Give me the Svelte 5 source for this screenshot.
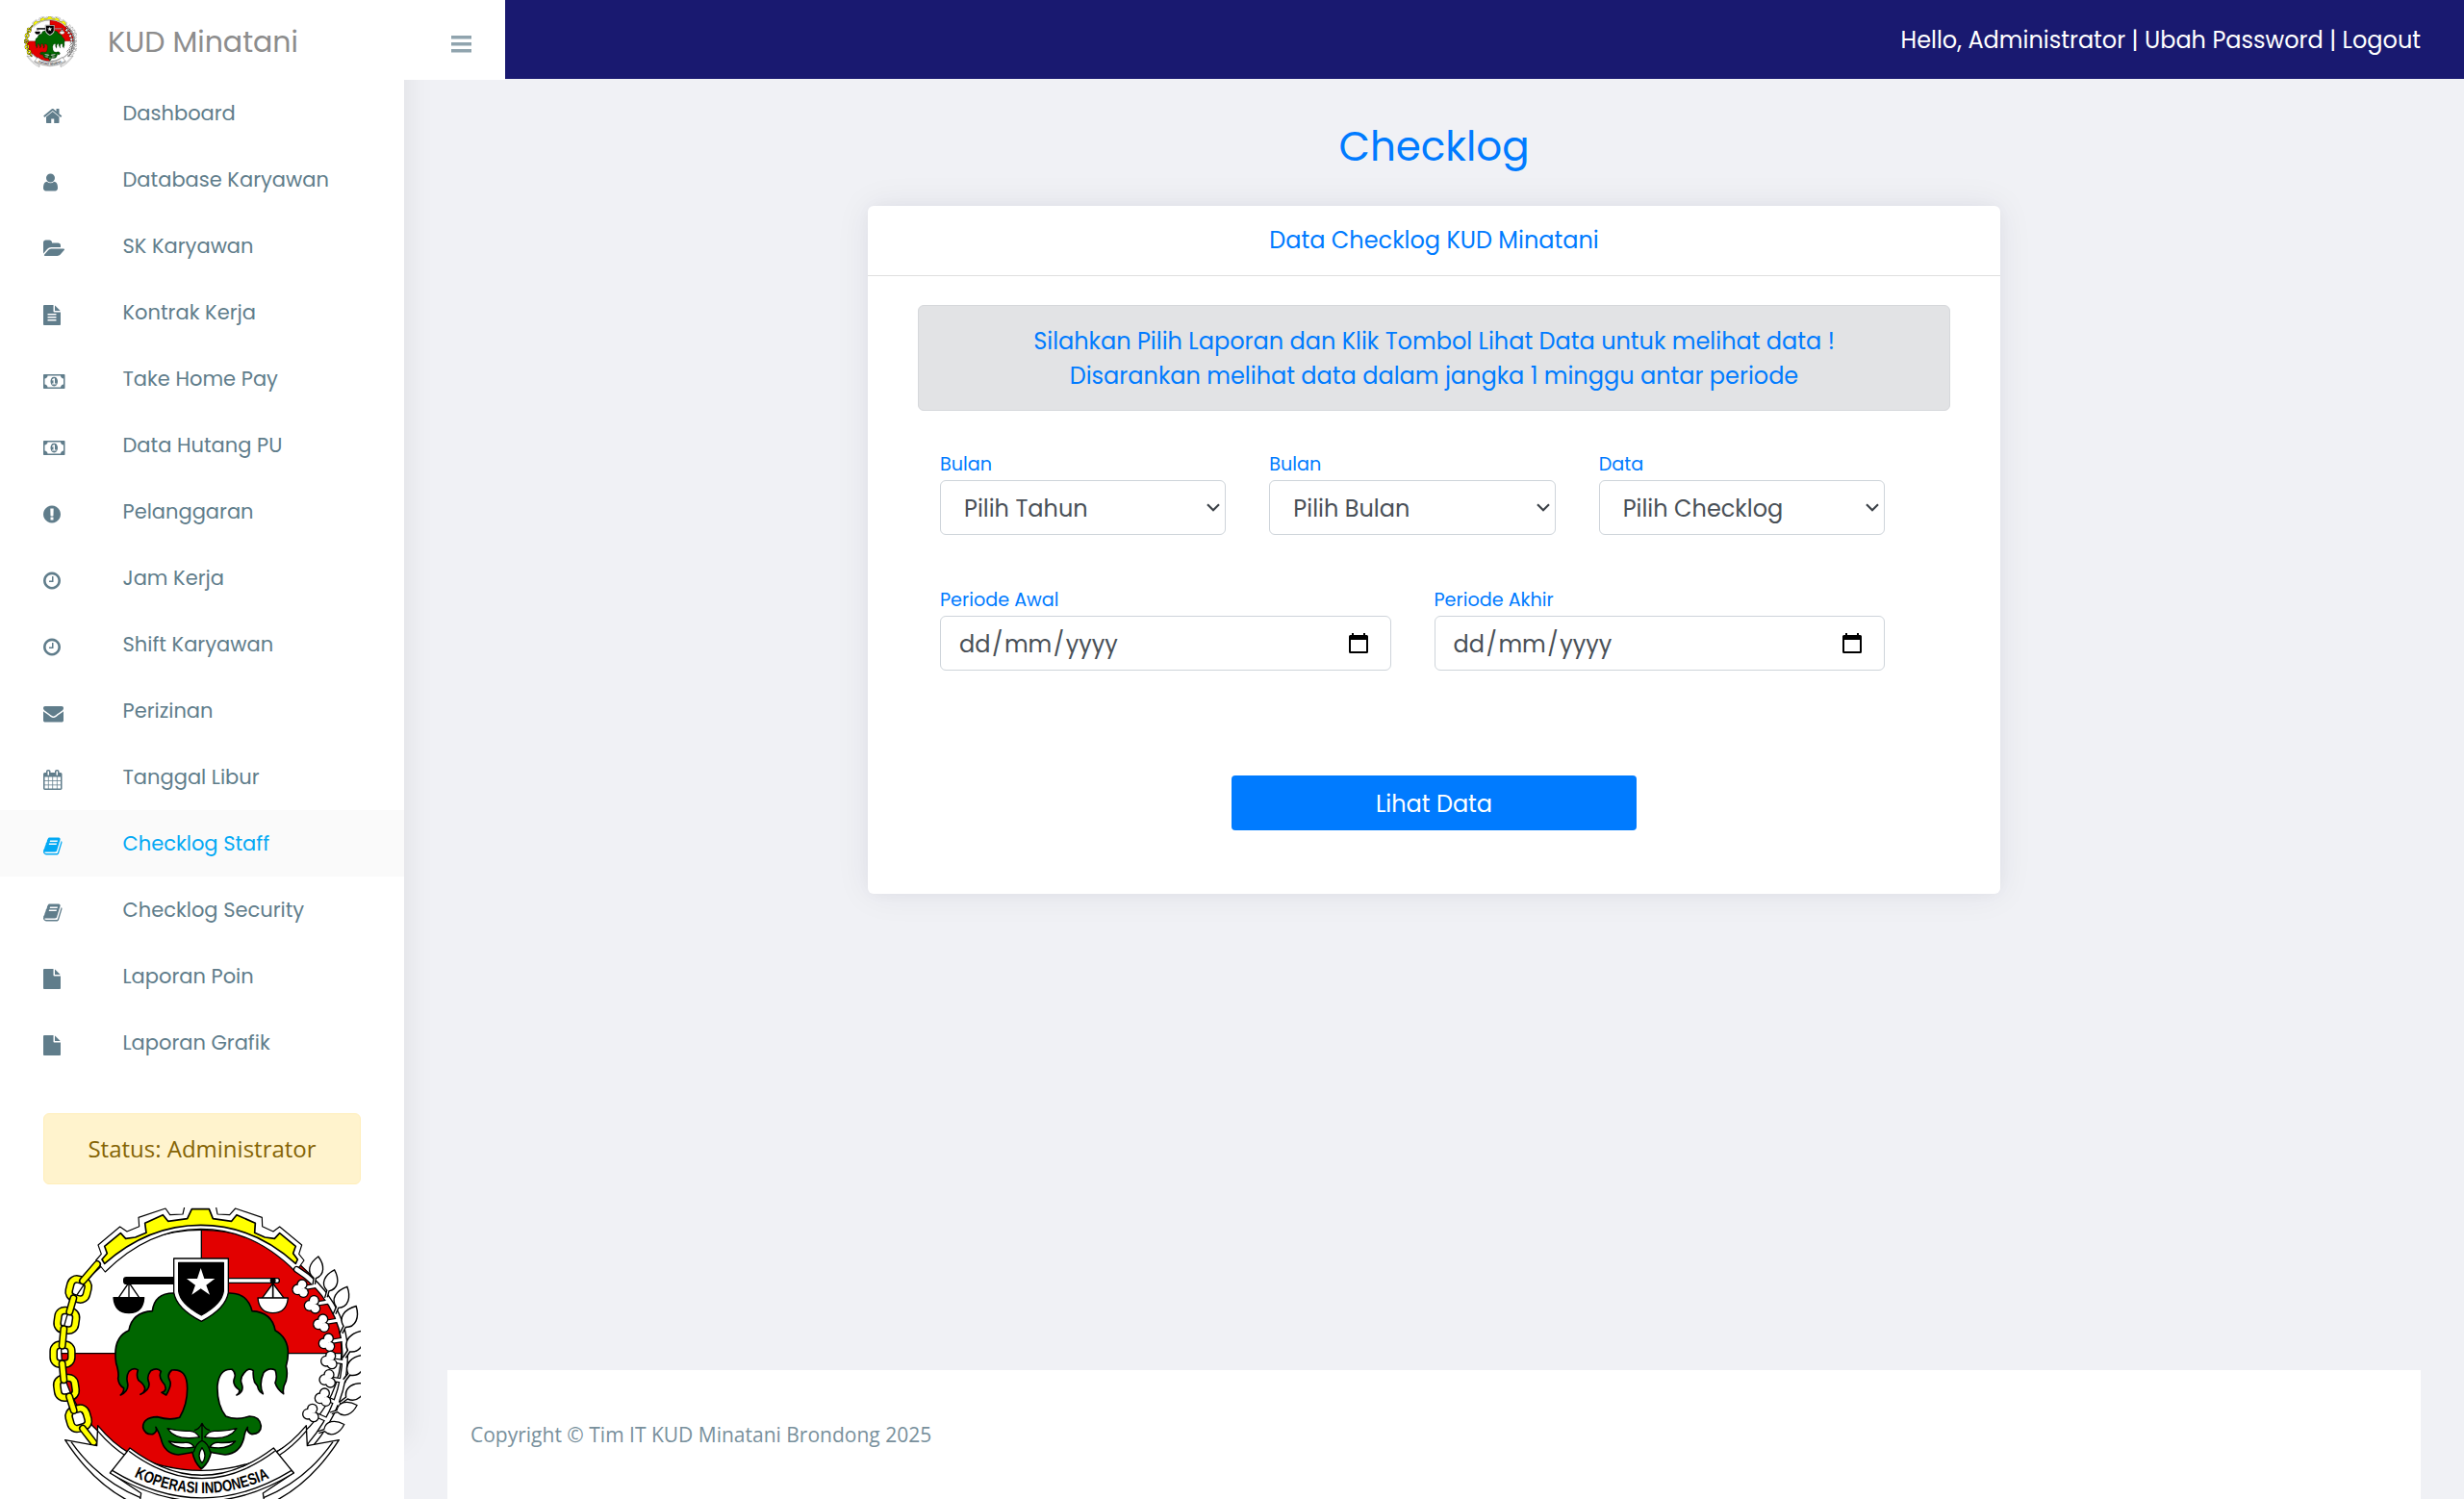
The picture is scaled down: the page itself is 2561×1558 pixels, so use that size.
<script>
  // Font Awesome style glyphs on a 1792 unit grid; x is the left edge of the ink.
  const glyphs = {
    home: { x: 64, d: 'M1472 992v480q0 26-19 45t-45 19h-384v-384h-256v384h-384q-26 0-45-19t-19-45v-480q0-1 .5-3t.5-3l575-474 575 474q1 2 1 6zm223-69l-62 74q-8 9-21 11h-3q-13 0-21-7l-692-577-692 577q-12 8-24 7-13-2-21-11l-62-74q-8-10-7-23.5t11-21.5l719-599q32-26 76-26t76 26l244 204v-195q0-14 9-23t23-9h192q14 0 23 9t9 23v408l219 182q10 8 11 21.5t-7 23.5z' },
    user: { x: 256, d: 'M1536 1399q0 109-62.5 187t-150.5 78h-854q-88 0-150.5-78t-62.5-187q0-85 8.5-160.5t31.5-152 58.5-131 94-89 134.5-34.5q131 128 313 128t313-128q76 0 134.5 34.5t94 89 58.5 131 31.5 152 8.5 160.5zm-256-887q0 159-112.5 271.5t-271.5 112.5-271.5-112.5-112.5-271.5 112.5-271.5 271.5-112.5 271.5 112.5 112.5 271.5z' },
    folder: { x: 0, d: 'M1879 952q0 31-31 66l-336 396q-43 51-120.5 86.5t-143.5 35.5h-1088q-34 0-60.5-13t-26.5-43q0-31 31-66l336-396q43-51 120.5-86.5t143.5-35.5h1088q34 0 60.5 13t26.5 43zm-343-344v160h-832q-94 0-197 47.5t-164 119.5l-337 396-5 6q0-4-.5-12.5t-.5-12.5v-960q0-92 66-158t158-66h320q92 0 158 66t66 158v32h544q92 0 158 66t66 158z' },
    fileText: { x: 128, d: 'M1596 476q14 14 28 36h-472v-472q22 14 36 28zm-476 164h544v1056q0 40-28 68t-68 28h-1344q-40 0-68-28t-28-68v-1600q0-40 28-68t68-28h800v544q0 40 28 68t68 28zm160 736v-64q0-14-9-23t-23-9h-704q-14 0-23 9t-9 23v64q0 14 9 23t23 9h704q14 0 23-9t9-23zm0-256v-64q0-14-9-23t-23-9h-704q-14 0-23 9t-9 23v64q0 14 9 23t23 9h704q14 0 23-9t9-23zm0-256v-64q0-14-9-23t-23-9h-704q-14 0-23 9t-9 23v64q0 14 9 23t23 9h704q14 0 23-9t9-23z' },
    file: { x: 128, d: 'M1596 476q14 14 28 36h-472v-472q22 14 36 28zm-476 164h544v1056q0 40-28 68t-68 28h-1344q-40 0-68-28t-28-68v-1600q0-40 28-68t68-28h800v544q0 40 28 68t68 28z' },
    money: { x: 0, d: 'M768 1152h384v-96h-128v-448h-114l-148 137 77 80q42-37 55-57h2v288h-128v96zm512-256q0 70-21 142t-59.5 134-101.5 101-138 39-138-39-101.5-101-59.5-134-21-142 21-142 59.5-134 101.5-101 138-39 138 39 101.5 101 59.5 134 21 142zm512 256v-512q-106 0-181-75t-75-181h-1152q0 106-75 181t-181 75v512q106 0 181 75t75 181h1152q0-106 75-181t181-75zm128-832v1152q0 26-19 45t-45 19h-1792q-26 0-45-19t-19-45v-1152q0-26 19-45t45-19h1792q26 0 45 19t19 45z' },
    alert: { x: 128, d: 'M896 128q209 0 385.5 103t279.5 279.5 103 385.5-103 385.5-279.5 279.5-385.5 103-385.5-103-279.5-279.5-103-385.5 103-385.5 279.5-279.5 385.5-103zm128 1247v-190q0-14-9-23.5t-22-9.5h-192q-13 0-23 10t-10 23v190q0 13 10 23t23 10h192q13 0 22-9.5t9-23.5zm-2-344l18-621q0-12-10-18-10-8-24-8h-220q-14 0-24 8-10 6-10 18l17 621q0 10 10 17.5t24 7.5h185q14 0 23.5-7.5t10.5-17.5z' },
    clock: { x: 128, d: 'M1024 544v448q0 14-9 23t-23 9h-320q-14 0-23-9t-9-23v-64q0-14 9-23t23-9h224v-352q0-14 9-23t23-9h64q14 0 23 9t9 23zm416 352q0-148-73-273t-198-198-273-73-273 73-198 198-73 273 73 273 198 198 273 73 273-73 198-198 73-273zm224 0q0 209-103 385.5t-279.5 279.5-385.5 103-385.5-103-279.5-279.5-103-385.5 103-385.5 279.5-279.5 385.5-103 385.5 103 279.5 279.5 103 385.5z' },
    mail: { x: 0, d: 'M1792 710v794q0 66-47 113t-113 47h-1472q-66 0-113-47t-47-113v-794q44 49 101 87 362 246 497 345 57 42 92.5 65.5t94.5 48 110 24.5h2q51 0 110-24.5t94.5-48 92.5-65.5q170-123 498-345 57-39 100-87zm0-294q0 79-49 151t-122 123q-376 261-468 325-10 7-42.5 31t-54 38.5-52 32.5-57.5 27-50 9h-2q-23 0-50-9t-57.5-27-52-32.5-54-38.5-42.5-31q-91-64-262-182.5t-205-142.5q-62-42-117-115.5t-55-136.5q0-78 41.5-130t118.5-52h1472q65 0 112.5 47t47.5 113z' },
    calendar: { x: 64, d: 'M192 1664h288v-288h-288v288zm352 0h320v-288h-320v288zm-352-352h288v-320h-288v320zm352 0h320v-320h-320v320zm-352-384h288v-288h-288v288zm736 736h320v-288h-320v288zm-384-736h320v-288h-320v288zm768 736h288v-288h-288v288zm-384-352h320v-320h-320v320zm-352-864v-288q0-13-9.5-22.5t-22.5-9.5h-64q-13 0-22.5 9.5t-9.5 22.5v288q0 13 9.5 22.5t22.5 9.5h64q13 0 22.5-9.5t9.5-22.5zm736 864h288v-320h-288v320zm-384-384h320v-288h-320v288zm384 0h288v-288h-288v288zm32-480v-288q0-13-9.5-22.5t-22.5-9.5h-64q-13 0-22.5 9.5t-9.5 22.5v288q0 13 9.5 22.5t22.5 9.5h64q13 0 22.5-9.5t9.5-22.5zm384-64v1280q0 52-38 90t-90 38h-1408q-52 0-90-38t-38-90v-1280q0-52 38-90t90-38h128v-96q0-66 47-113t113-47h64q66 0 113 47t47 113v96h384v-96q0-66 47-113t113-47h64q66 0 113 47t47 113v96h128q52 0 90 38t38 90z' },
    book: { x: 64, d: 'M1703 478q40 57 18 129l-275 906q-19 64-76.5 107.5t-122.5 43.5h-923q-77 0-148.5-53.5t-99.5-131.5q-24-67-2-127 0-4 3-27t4-37q1-8-3-21.5t-3-19.5q2-11 8-21t16.5-23.5 16.5-23.5q23-38 45-91.5t30-91.5q3-10 .5-30t-.5-28q3-11 17-28t17-23q21-36 42-92t25-90q1-9-2.5-32t.5-28q4-13 22-30.5t22-22.5q19-26 42.5-84.5t27.5-96.5q1-8-3-25.5t-2-26.5q2-8 9-18t18-23 17-21q8-12 16.5-30.5t15-35 16-36 19.5-32 26.5-23.5 36-11.5 47.5 5.5l-1 3q38-9 51-9h761q74 0 114 56t18 130l-274 906q-36 119-71.5 153.5t-128.5 34.5h-869q-27 0-38 15-11 16-1 43 24 70 144 70h923q29 0 56-15.5t35-41.5l300-987q7-22 5-57 38 15 59 43zm-1064 2q-4 13 2 22.5t20 9.5h608q13 0 25.5-9.5t16.5-22.5l21-64q4-13-2-22.5t-20-9.5h-608q-13 0-25.5 9.5t-16.5 22.5zm-83 256q-4 13 2 22.5t20 9.5h608q13 0 25.5-9.5t16.5-22.5l21-64q4-13-2-22.5t-20-9.5h-608q-13 0-25.5 9.5t-16.5 22.5z' }
  };

  const menu = [
    { label: 'Dashboard', icon: 'home' },
    { label: 'Database Karyawan', icon: 'user' },
    { label: 'SK Karyawan', icon: 'folder' },
    { label: 'Kontrak Kerja', icon: 'fileText' },
    { label: 'Take Home Pay', icon: 'money' },
    { label: 'Data Hutang PU', icon: 'money' },
    { label: 'Pelanggaran', icon: 'alert' },
    { label: 'Jam Kerja', icon: 'clock' },
    { label: 'Shift Karyawan', icon: 'clock' },
    { label: 'Perizinan', icon: 'mail' },
    { label: 'Tanggal Libur', icon: 'calendar' },
    { label: 'Checklog Staff', icon: 'book', active: true },
    { label: 'Checklog Security', icon: 'book' },
    { label: 'Laporan Poin', icon: 'file' },
    { label: 'Laporan Grafik', icon: 'file' }
  ];

  const selects = [
    { label: 'Bulan', value: 'Pilih Tahun' },
    { label: 'Bulan', value: 'Pilih Bulan' },
    { label: 'Data', value: 'Pilih Checklog' }
  ];
  const dates = ['Periode Awal', 'Periode Akhir'];

  const links = [[245, 600, 14], [208, 697, 8], [195, 803, 0], [207, 907, -8], [245, 1003, -16]];
  const bars = [[303, 522, 258, 574], [229, 628, 217, 670], [199, 724, 194, 776], [194, 832, 199, 883], [216, 934, 230, 978], [258, 1034, 292, 1078]];
  const leaves = [[980, 573, 8, 1], [1020, 612, 16, 1], [1048, 664, 24, 1.05], [1070, 724, 28, 1.08], [1082, 800, 34, 1.15], [1082, 872, 38, 1.15], [1074, 944, 52, 1.1], [1044, 982, 72, 0.95], [1004, 1042, 72, 0.95]];
  const flowers = [[938, 597], [975, 647], [1003, 705], [1020, 765], [1027, 820], [1022, 878], [1008, 936], [970, 985]];
</script>

{#snippet emblem(id)}
  <svg class="emblem" viewBox="135 345 990 990" aria-hidden="true">
    <ellipse cx="628" cy="790" rx="437" ry="375" fill="#fff" />
    <path d="M628 415A437 375 0 0 1 1065 800H628Z" fill="#e20000" />
    <path d="M191 800A437 375 0 0 0 628 1165V800Z" fill="#e20000" />
    <g fill="none" stroke="#000" stroke-width="4">
      <path d="M628 400V800M191 800H1065" />
      <ellipse cx="628" cy="790" rx="437" ry="375" />
      <path d="M304 1040Q440 1180 628 1180T956 1040" />
    </g>

    <!-- gear -->
    <path d="M328 546L299 510L316 490L306 462L374 405L396 420L434 404L432 376L516 348L530 368L570 366L577 335H672L678 366L716 368L734 348L817 376L818 404L852 420L872 405L941 462L932 490L948 510L922 546Q790 412 626 412T328 546Z" fill="#fff" stroke="#000" stroke-width="3.5" stroke-linejoin="round" />
    <path d="M326 520L318 507L334 488L326 466L376 425L392 442L422 438L456 424L452 394L508 368L524 388L584 380L598 350H652L664 380L722 388L738 368L796 394L794 424L826 438L856 442L872 425L922 466L914 488L928 507L922 520Q790 400 626 400T326 520Z" fill="#ff0" stroke="#000" stroke-width="5" stroke-linejoin="round" />

    <!-- chain -->
    {#each links as [x, y, a]}
      <g transform="translate({x} {y}) rotate({a})">
        <rect x="-28" y="-30" width="56" height="60" rx="20" fill="none" stroke="#000" stroke-width="26" />
        <rect x="-28" y="-30" width="56" height="60" rx="20" fill="none" stroke="#ff0" stroke-width="17" />
      </g>
    {/each}
    {#each bars as [x1, y1, x2, y2]}
      <path d="M{x1} {y1}L{x2} {y2}" stroke="#000" stroke-width="24" stroke-linecap="round" />
      <path d="M{x1} {y1}L{x2} {y2}" stroke="#ff0" stroke-width="15" stroke-linecap="round" />
    {/each}

    <!-- cotton and rice branch -->
    <g stroke-linecap="round" fill="none">
      <path d="M925 538C1010 590 1076 690 1076 800C1076 900 1040 1000 968 1085" stroke="#000" stroke-width="21" />
      {#each flowers as [x, y], i}
        <path d="M{x} {y}L{x + 50} {y + (i < 4 ? -8 : i < 6 ? 8 : 22)}" stroke="#000" stroke-width="16" />
      {/each}
      <path d="M925 538C1010 590 1076 690 1076 800C1076 900 1040 1000 968 1085" stroke="#fff" stroke-width="13" />
    </g>
    {#each leaves as [x, y, a, s]}
      <g transform="translate({x} {y}) rotate({a}) scale({s})">
        <path d="M-3 16V-8C-28 -22 -24 -52 2 -76C26 -52 30 -22 4 -8V12" fill="#fff" stroke="#000" stroke-width="4" />
      </g>
    {/each}
    {#each flowers as [x, y], i}
      <path d="M{x} {y}L{x + 50} {y + (i < 4 ? -8 : i < 6 ? 8 : 22)}" stroke="#fff" stroke-width="9" />
      <g stroke="#000" stroke-width="8">
        <circle cx={x - 10} cy={y + 4} r="14" /><circle cx={x + 4} cy={y - 12} r="13" /><circle cx={x + 8} cy={y + 13} r="13" />
      </g>
      <g fill="#fff">
        <circle cx={x - 10} cy={y + 4} r="14" /><circle cx={x + 4} cy={y - 12} r="13" /><circle cx={x + 8} cy={y + 13} r="13" />
      </g>
    {/each}

    <!-- banyan tree -->
    <path d="M545 612Q482 610 475 668Q412 672 402 728Q350 750 362 830Q372 862 368 878Q370 900 386 908Q386 922 376 930Q402 918 398 894Q392 872 402 856Q418 842 430 852Q424 872 432 884Q450 896 452 910Q450 922 438 928Q470 912 464 890Q456 872 470 854Q490 842 502 856Q494 872 506 888Q518 900 516 912Q514 920 504 922L518 930Q536 900 530 886Q518 866 536 852Q584 846 584 910Q584 960 560 1000Q530 1010 490 998Q444 1000 446 1032Q452 1054 476 1052Q492 1044 486 1030Q498 1050 502 1066Q512 1112 556 1116Q588 1112 600 1108Q606 1140 628 1160Q652 1140 658 1108Q670 1112 702 1116Q748 1112 760 1066Q762 1046 772 1030Q768 1046 786 1052Q814 1050 814 1026Q810 996 778 996Q736 1010 704 996Q676 960 678 900Q684 846 724 850Q738 862 730 880Q724 898 746 914Q748 924 738 930Q762 920 754 896Q746 878 762 860Q776 842 790 854Q788 872 794 890Q804 900 806 912Q810 922 820 926Q806 896 822 860Q838 842 858 852Q866 872 858 892Q864 912 884 926Q880 908 892 886Q898 860 892 840Q914 760 858 728Q848 672 786 668Q772 610 712 612Z" fill="#060" stroke="#000" stroke-width="5" stroke-linejoin="round" />
    <g fill="#fff" stroke="#000" stroke-width="4" stroke-linejoin="round">
      <path d="M522 1034Q548 1074 622 1061Q610 1042 592 1042Q556 1044 522 1034ZM738 1034Q712 1074 638 1061Q650 1042 668 1042Q704 1044 738 1034Z" />
      <path d="M526 1074Q550 1102 606 1092Q594 1076 578 1078Q552 1080 526 1074ZM734 1074Q710 1102 654 1092Q666 1076 682 1078Q708 1080 734 1074Z" />
      <path d="M630 1094Q612 1120 630 1142Q648 1120 630 1094Z" />
      <path d="M604 1108Q612 1078 630 1072Q648 1078 656 1108M630 1018V1070M606 1040Q622 1036 630 1018Q638 1036 654 1040" fill="none" />
    </g>

    <!-- scales and shield -->
    <g stroke="#000" stroke-width="4" stroke-linejoin="round">
      <rect x="386" y="563" width="160" height="20" rx="8" />
      <rect x="706" y="566" width="165" height="14" rx="6" fill="#fff" />
      <path d="M402 580V625M400 582L370 626M404 582L434 626" fill="none" />
      <path d="M354 626H449Q446 674 402 674T354 626Z" />
      <path d="M851 582L817 628H886Z" fill="#fff" /><path d="M851 568V628" stroke-width="5" />
      <path d="M804 627H898Q894 674 851 674T804 627Z" fill="#fff" />
      <circle cx="851" cy="573" r="7" />
      <path d="M542 504H712V610Q704 660 628 700Q550 660 542 610Z" fill="#fff" />
      <path d="M557 517H697V606Q692 646 628 681Q562 646 557 606Z" />
    </g>
    <path d="M626 534L637 567H670L643 587L654 617L626 598L598 617L609 587L582 567H615Z" fill="#fff" />

    <!-- ribbon -->
    <g fill="#fff" stroke="#000" stroke-width="4" stroke-linejoin="round">
      <path d="M203 1070L302 1088L305 1025Q350 1080 405 1112L344 1172L440 1236L434 1275Q300 1220 203 1070Z" />
      <path d="M1057 1070L958 1088L955 1025Q910 1080 855 1112L916 1172L820 1236L826 1275Q960 1220 1057 1070Z" />
      <path d="M222 1076Q306 1196 438 1250M1038 1076Q954 1196 822 1250" fill="none" />
      <path d="M305 1042Q350 1094 396 1122M955 1042Q910 1094 864 1122" fill="none" />
      <path d="M405 1095Q630 1265 853 1095L916 1173Q630 1349 343 1173Z" />
      <path d="M402 1105Q630 1275 857 1105M350 1165Q630 1336 909 1165" fill="none" />
    </g>
    <path {id} d="M418 1184Q630 1288 850 1184" fill="none" />
    <text class="motto"><textPath href="#{id}" textLength="438" lengthAdjust="spacingAndGlyphs">KOPERASI INDONESIA</textPath></text>
  </svg>
{/snippet}

<div class="page">
  <header class="topbar">
    <div class="brand">
      <div class="logo">{@render emblem('motto-small')}</div>
      <span class="name">KUD Minatani</span>
      <svg class="burger" viewBox="0 0 21 18"><path d="M0 0h21v3.6H0zM0 7h21v3.6H0zM0 14h21v3.6H0z" /></svg>
    </div>
    <div class="account"><span>Hello, Administrator | Ubah Password | Logout</span></div>
  </header>

  <div class="body">
    <aside>
      <nav>
        {#each menu as item}
          <a class="row" class:active={item.active} href="#{item.label}">
            <span class="ico">
              <svg viewBox="{glyphs[item.icon].x} 0 1920 1792"><path d={glyphs[item.icon].d} /></svg>
            </span>
            <span>{item.label}</span>
          </a>
        {/each}
      </nav>
      <div class="status"><span>Status: Administrator</span></div>
      <div class="crest">{@render emblem('motto-large')}</div>
    </aside>

    <main>
      <h1>Checklog</h1>
      <section class="card">
        <div class="card-head">Data Checklog KUD Minatani</div>
        <div class="notice">
          <div>Silahkan Pilih Laporan dan Klik Tombol Lihat Data untuk melihat data !</div>
          <div>Disarankan melihat data dalam jangka 1 minggu antar periode</div>
        </div>
        <div class="fields three">
          {#each selects as s}
            <div class="field">
              <div class="label">{s.label}</div>
              <div class="box select">
                <span>{s.value}</span>
                <svg class="chev" viewBox="0 0 14 9"><path d="M1 1.2l6 6 6-6" /></svg>
              </div>
            </div>
          {/each}
        </div>
        <div class="fields two">
          {#each dates as label}
            <div class="field">
              <div class="label">{label}</div>
              <div class="box date">
                <span class="mask">dd<i>/</i>mm<i>/</i>yyyy</span>
                <svg class="cal" viewBox="0 0 20 21"><path fill-rule="evenodd" d="M3 0h2v2h10V0h2v2h1.500Q20 2 20 3.500v16q0 1.500-1.500 1.500h-17Q0 21 0 19.500v-16Q0 2 1.500 2H3zM2 7v12h16V7z" /></svg>
              </div>
            </div>
          {/each}
        </div>
        <button>Lihat Data</button>
      </section>
      <footer>Copyright © Tim IT KUD Minatani Brondong 2025</footer>
    </main>
  </div>
</div>

<style>
  :global(body) { margin: 0; overflow: hidden; background: #f0f1f5; }
  .page {
    height: 1558px; overflow: hidden; display: flex; flex-direction: column;
    font-family: Poppins, Inter, "Open Sans", sans-serif; font-size: 24px;
    color: #007bff; background: #f0f1f5;
  }
  span { display: inline-block; white-space: nowrap; }
  svg { display: block; }
  .topbar { display: flex; height: 83px; flex: none; position: relative; z-index: 2; }
  .brand { width: 525px; box-sizing: border-box; display: flex; align-items: center; background: #fff; padding: 3px 0 0 24px; }
  .logo { width: 56px; height: 56px; margin-top: 3px; }
  .name { margin-left: 32px; margin-top: 2px; font-size: 30px; color: #8d8d8d; }
  .burger { width: 21px; height: 18px; margin-left: auto; margin-right: 35px; margin-top: 5px; fill: #90a4ae; }
  .account { flex: 1; height: 82px; box-sizing: border-box; display: flex; align-items: center; justify-content: flex-end; padding: 1px 45px 0 0; color: #fff; background: #191970; }
  .body { flex: 1; display: flex; min-height: 0; }
  aside { width: 420px; flex: none; background: #fff; box-shadow: 1px -60px 30px rgba(0, 0, 0, .08); }
  .row { display: flex; align-items: center; height: 69px; padding-left: 45px; font-size: 21px; color: #607d8b; text-decoration: none; }
  .ico { width: 82.5px; }
  .ico svg { width: 22.5px; height: 21px; margin-top: 6px; fill: currentColor; }
  .active { background: #fafafa; color: #03a9f4; }
  .status {
    margin: 39px 45px 24px; height: 74px; box-sizing: border-box; border: 1px solid #ffeeba; border-radius: 6px;
    display: flex; align-items: center; justify-content: center; padding-bottom: 2px; background: #fff3cd; color: #856404;
    font-family: "Open Sans", sans-serif; font-size: 24px;
  }
  .crest { width: 330px; height: 330px; margin-left: 45px; }
  .emblem { width: 100%; height: 100%; }
  .motto { font: 700 50px "Liberation Sans", sans-serif; fill: #000; }
  main { flex: 1; display: flex; flex-direction: column; align-items: center; padding: 0 45px; }
  h1 { margin: 43px 0 34px; height: 54px; line-height: 54px; font-size: 42px; font-weight: 400; }
  .card {
    width: 1177px; height: 715px; box-sizing: border-box; border-radius: 6px; background: #fff;
    box-shadow: 0 0 37px rgba(8, 21, 66, .07), 0 0 14px rgba(0, 0, 0, .03);
    display: flex; flex-direction: column; align-items: center;
  }
  .card-head { align-self: stretch; height: 72px; line-height: 72px; text-align: center; border-bottom: 1px solid #dfdfdf; }
  .notice {
    width: 1073px; height: 110px; margin-top: 30px; box-sizing: border-box; padding-top: 19px; text-align: center; line-height: 36px;
    background: #e2e3e5; border: 1px solid #d6d8db; border-radius: 6px;
  }
  .fields { width: 982px; align-self: flex-start; margin-left: 75px; display: grid; column-gap: 45px; }
  .three { grid-template-columns: repeat(3, 1fr); margin-top: 41px; }
  .two { grid-template-columns: repeat(2, 1fr); margin-top: 53px; }
  .label { height: 31px; line-height: 29px; font-size: 19.2px; }
  .box {
    height: 57px; box-sizing: border-box; display: flex; align-items: center; justify-content: space-between;
    border: 1px solid #ced4da; border-radius: 6px; color: #495057; background: #fff;
  }
  .box span { padding-top: 1px; }
  .select { padding: 0 5px 0 24px; }
  .date { padding: 0 23px 0 19px; }
  .mask i { font-style: normal; padding: 0 1.5px; }
  .chev { width: 14px; height: 9px; fill: none; stroke: #3c4248; stroke-width: 2.2; }
  .cal { width: 20px; height: 21px; margin-top: -1px; fill: #000; }
  button {
    width: 421px; height: 57px; margin-top: 109px; padding: 1px 0 0; border: 0; border-radius: 4px;
    background: #007bff; color: #fff; font: inherit;
  }
  footer {
    width: 2051px; height: 134px; margin-top: auto; box-sizing: border-box; padding: 0 24px; line-height: 134px;
    background: #fff; color: #78909c; font-family: "Open Sans", sans-serif; font-size: 21px;
  }
</style>
